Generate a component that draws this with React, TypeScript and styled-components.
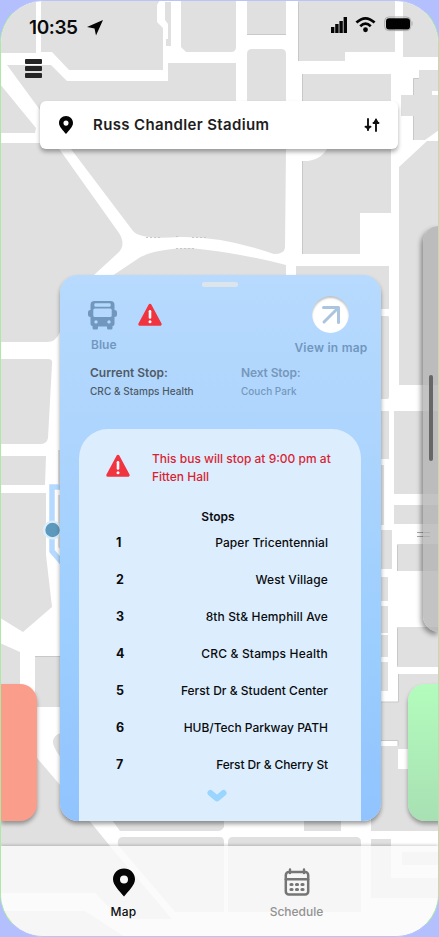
import React from "react";
import styled, { createGlobalStyle } from "styled-components";

const Global = createGlobalStyle`
  html, body { margin: 0; background: #b3c0fd; }
  * { box-sizing: border-box; }
`;

const Phone = styled.main`
  position: relative;
  width: 439px;
  height: 937px;
  overflow: hidden;
  display: flex;
  flex-direction: column;
  background: #fff;
  border: 1px solid #aee8a6;
  border-top-color: #b8c4fa;
  border-bottom-color: #b8c4fa;
  border-radius: 43px;
  font-family: Inter, "Open Sans", sans-serif;
  color: #0b0b0d;
`;

const MapLayer = styled.svg`
  position: absolute;
  inset: -1px auto auto -1px;
  width: 439px;
  height: 937px;
`;

const Label = styled.span<{ $size: number; $weight?: number; $track?: number; $color?: string }>`
  display: block;
  font-size: ${(p) => p.$size}px;
  font-weight: ${(p) => p.$weight ?? 500};
  letter-spacing: ${(p) => p.$track ?? 0}px;
  color: ${(p) => p.$color ?? "inherit"};
  line-height: 18px;
  white-space: nowrap;
`;

const StatusBar = styled.header`
  position: relative;
  height: 54px;
  padding: 0 25px 0 28px;
  display: flex;
  align-items: center;
  flex: none;
`;

const LocationArrow = styled.svg`
  margin-left: 9px;
`;

const StatusIcons = styled.div`
  margin-left: auto;
  margin-top: -7px;
  display: flex;
  align-items: center;
  gap: 8px;
`;

const MenuRow = styled.div`
  position: relative;
  height: 46px;
  padding: 4px 0 0 24px;
  flex: none;
`;

const MenuButton = styled.button`
  display: flex;
  flex-direction: column;
  gap: 2px;
  width: 17px;
  padding: 0;
  border: 0;
  background: none;
`;

const MenuBar = styled.i`
  height: 5px;
  border-radius: 1px;
  background: #252526;
`;

const Search = styled.div`
  position: relative;
  flex: none;
  width: 358px;
  height: 48px;
  margin-left: 39px;
  padding: 0 18px 0 19px;
  display: flex;
  align-items: center;
  background: #fff;
  border-radius: 6px;
  box-shadow: 0 3px 4px rgba(0, 0, 0, 0.32);
`;

const SearchText = styled.div`
  flex: 1;
  padding-left: 20px;
`;

const Deck = styled.section`
  position: relative;
  flex: none;
  height: 546px;
  margin-top: 126px;
  display: flex;
  align-items: flex-end;
  gap: 23px;
`;

const SideCard = styled.div<{ $side: "left" | "right" }>`
  flex: none;
  height: 137px;
  width: ${(p) => (p.$side === "left" ? 36 : 40)}px;
  margin-left: ${(p) => (p.$side === "left" ? 0 : 4)}px;
  border-radius: ${(p) => (p.$side === "left" ? "0 17px 17px 0" : "17px 0 0 17px")};
  background: ${(p) => (p.$side === "left" ? "#fb9d8b" : "linear-gradient(#b3fcbd, #a8e0b3)")};
  box-shadow: 0 3px 4px rgba(0, 0, 0, 0.35);
`;

const RouteCard = styled.article`
  flex: none;
  width: 321px;
  height: 546px;
  padding: 7px 20px 0 19px;
  overflow: hidden;
  display: flex;
  flex-direction: column;
  border-radius: 18px;
  background: linear-gradient(#b7dafe 0%, #aed5fd 28%, #9ccefe 66%, #91c3fe 100%);
  box-shadow: 0 3px 4px rgba(0, 0, 0, 0.38);
`;

const Grip = styled.i`
  align-self: center;
  width: 36px;
  height: 5px;
  border-radius: 2px;
  background: #dce4ec;
  flex: none;
`;

const CardHead = styled.div`
  display: flex;
  justify-content: space-between;
  height: 77px;
  flex: none;
  padding: 9px 0 0 9px;
`;

const BusColumn = styled.div`
  width: 80px;
  padding-top: 4px;
`;

const BusIcons = styled.div`
  display: flex;
  align-items: center;
  gap: 20px;
  height: 30px;
`;

const BusName = styled.div`
  margin-top: 6px;
  padding-left: 3px;
`;

const ViewButton = styled.button`
  display: flex;
  flex-direction: column;
  align-items: center;
  width: 76px;
  margin-right: -8px;
  padding: 0;
  border: 0;
  background: none;
  font-family: inherit;
  gap: 6px;
`;

const Circle = styled.i`
  display: flex;
  align-items: center;
  justify-content: center;
  width: 37px;
  height: 37px;
  margin-right: 1px;
  border-radius: 50%;
  background: #fff;
  box-shadow: inset 0 2px 2px rgba(70, 80, 95, 0.35);
`;

const StopSummary = styled.div`
  display: grid;
  grid-template-columns: 151px 1fr;
  height: 65px;
  padding-left: 11px;
  flex: none;
`;

const SummaryItem = styled.div`
  display: flex;
  flex-direction: column;
`;

const Panel = styled.div`
  flex: 1;
  display: flex;
  flex-direction: column;
  border-radius: 29px 29px 0 0;
  background: #dceefe;
`;

const Notice = styled.div`
  display: flex;
  height: 78px;
  padding: 21px 0 0 26px;
  gap: 21px;
`;

const NoticeIcon = styled.div`
  padding-top: 4px;
`;

const NoticeText = styled.p`
  margin: 0;
  display: flex;
  flex-direction: column;
`;

const StopsTitle = styled.h2`
  margin: 0;
  height: 17px;
  padding: 1px 4px 0 0;
  text-align: center;
`;

const StopList = styled.ol`
  margin: 0;
  padding: 0;
  list-style: none;
`;

const StopRow = styled.li`
  height: 37px;
  padding: 0 33px 0 37px;
  display: flex;
  justify-content: space-between;
  align-items: center;
`;

const More = styled.div`
  display: flex;
  justify-content: center;
  padding: 6px 6px 0 0;
`;

const Drawer = styled.aside`
  position: absolute;
  right: -1px;
  top: 225px;
  width: 16px;
  height: 406px;
  padding: 149px 0 0 6px;
  border-radius: 17px 0 0 17px;
  background: rgba(178, 178, 178, 0.78);
  box-shadow: -2px 3px 5px rgba(0, 0, 0, 0.4);
`;

const DrawerGrip = styled.i`
  display: block;
  width: 4px;
  height: 86px;
  border-radius: 2px;
  background: #666;
`;

const Nav = styled.nav`
  position: relative;
  margin-top: auto;
  height: 90px;
  flex: none;
  display: flex;
  padding-left: 36px;
  background: rgba(250, 250, 250, 0.84);
  box-shadow: 0 -1px 3px rgba(0, 0, 0, 0.2);
`;

const NavItem = styled.button`
  width: 173px;
  padding: 22px 0 0;
  border: 0;
  background: none;
  display: flex;
  flex-direction: column;
  justify-content: flex-start;
  align-items: center;
  gap: 6px;
  font-family: inherit;
  color: #0b0b0d;
`;

const CampusMap = () => (
  <MapLayer viewBox="0 0 439 937">
    <g fill="#e0e0e0">
      <path d="M0 0H36V53H0z" />
      <path d="M41 0H160L157 5V22L163 28V70H69L52 52H41z" />
      <path d="M165 2h6v44h-5v-7h2V24l-3-4z" />
      <path d="M181 0H236V47q0 5-5 5H186l-5-5z" />
      <path d="M247 0H286V34H247zM298 0H395V52H345V61H298zM403 0H439V57H403z" />
      <path d="M7 65H51L67 81H168V63H236V110H40z" />
      <path d="M247 110V54q0-5 5-5H281q5 0 5 5V110zM302 74H391V110H302z" />
      <path d="M0 84L36 128L35 133H0zM0 143H55L119 233Q126 244 119 252L94 275L60 310V332Q56 342 47 342H0z" />
      <path d="M71 149H286L285 248Q284 254 274 254Q222 236 180 237Q140 240 133 231z" />
      <path d="M112 276L136 260Q150 249 190 248Q235 252 286 265V277z" />
      <path d="M302 161Q319 162 327 149H391V213H360V254H302zM296 266H389V309H296z" />
      <path d="M413 78H419V70H439V91H432V95H439V130L425 140H413V116H401V95H413z" />
      <path d="M399 167L427 141H439V385H399z" />
      <path d="M0 359H48Q53 359 52 364L48 438Q47 444 40 444H0zM0 456H46L45 485H0zM0 493H46V555L52 607L23 632L0 618z" />
      <path d="M0 643L20 652V707H0zM35 656H70V707H35zM58 450h10v34h-10zM58 495h10v60l-10-8z" />
      <path d="M70 732Q53 732 53 742Q53 750 70 768zM0 720L37 758L61 786L110 846H0z" />
      <path d="M380 316h8q1 0 1 2v79q0 2-2 2h-7zM380 411h9v48h-9zM380 465h4v60h-4zM380 530h12v39h-12zM380 577h8v24h-8zM380 606h8v27h-8zM380 635h8v22h-8zM380 662h8v29h-8z" />
      <path d="M394 411H439V494H394zM394 505H439V524H394zM397 544H439V571H397zM397 627H439V667H397z" />
      <path d="M398 674H439V831H371V746H398V740H380V702H398z" />
      <path d="M112 820H224V827q-2 4-6 4H120zM304 820H341V831H304zM122 837H220q4 0 4 5V912H175L118 845q-1-7 4-8zM233 837H356q5 0 5 5V912H228V842q0-5 5-5zM371 839H391V878H439V898H371z" />
      <path d="M402 852H439V865H402zM0 846H110L172 919H120L95 893H0zM0 911H85L125 937H0z" />
    </g>
    <g fill="#fff">
      <path d="M398 749H408V769H398z" />
    </g>
    <g fill="none" stroke="#c8c8c8" strokeWidth="1">
      <path d="M298.5 2V61M302.5 74V101M247 34.5H286M413.5 140V116M413.5 95V78.500H419M302.500 161V254M398.500 674V702H381M381 740.500H398V746M35 656.500H60M397.500 545V571M397.500 628V666" />
      <path d="M146 237.500H160M176 236.500H180M192 237.500H206M176 248.500H194" strokeDasharray="2 2" />
      <path d="M417 532.500H430M417 536.500H430" stroke="#aaa" />
    </g>
    <path d="M62 487H52V551L64 565" fill="none" stroke="#b6daff" strokeWidth="5.500" />
    <circle cx="52.500" cy="530" r="9.500" fill="#dceefb" />
    <circle cx="52.500" cy="530" r="7.200" fill="#5d99bd" />
  </MapLayer>
);

const Pin = ({ w, h }: { w: number; h: number }) => (
  <svg width={w} height={h} viewBox="0 0 22 28">
    <path fill="#050505" fillRule="evenodd" d="M11 0C4.800 0 0 4.700 0 10.700C0 16.500 6.500 22.500 11 28C15.500 22.500 22 16.500 22 10.700C22 4.700 17.200 0 11 0zM11 7a4 4 0 1 1 0 8a4 4 0 0 1 0-8z" />
  </svg>
);

const Warning = () => (
  <svg width="26" height="24" viewBox="0 0 26 24">
    <path d="M13 2.200L23.200 21.200H2.800z" fill="#f03440" stroke="#f03440" strokeWidth="3" strokeLinejoin="round" />
    <path d="M13 8.300V14.500" stroke="#fff" strokeWidth="2.600" strokeLinecap="round" />
    <circle cx="13" cy="18.800" r="1.500" fill="#fff" />
  </svg>
);

const Bus = () => (
  <svg width="29" height="29" viewBox="0 0 29 29">
    <path fill="#7197bf" fillRule="evenodd" d="M6.500 0H22.500Q26.500 0 26.500 4V9Q29 9 29 11V14Q29 16 26.500 16V23Q26.500 25 24.500 25V27Q24.500 28.500 23 28.500H20.500Q19 28.500 19 27V25.500H10V27Q10 28.500 8.500 28.500H6Q4.500 28.500 4.500 27V25Q2.500 25 2.500 23V16Q0 16 0 14V11Q0 9 2.500 9V4Q2.500 0 6.500 0zM7.500 2.300Q6.300 2.300 6.300 3.500V4.500Q6.300 5.700 7.500 5.700H21.500Q22.700 5.700 22.700 4.500V3.500Q22.700 2.300 21.500 2.300zM6.800 7.500Q5.300 7.500 5.300 9V14.500Q5.300 16 6.800 16H22.200Q23.700 16 23.700 14.500V9Q23.700 7.500 22.200 7.500zM8 19.200a1.700 1.700 0 1 0 0 3.400a1.700 1.700 0 0 0 0-3.400zM21 19.200a1.700 1.700 0 1 0 0 3.400a1.700 1.700 0 0 0 0-3.400z" />
  </svg>
);

const Calendar = () => (
  <svg width="26" height="29" viewBox="0 0 26 29" fill="none" stroke="#757575" strokeLinecap="round">
    <rect x="1.800" y="4" width="22.400" height="22.500" rx="3" strokeWidth="2.500" />
    <path d="M2 11.200H24" strokeWidth="2.600" />
    <path d="M6 1.500V5M20 1.500V5" strokeWidth="2.400" />
    <path d="M7 16.500h1M12.500 16.500h1M18 16.500h1M7 21.500h1M12.500 21.500h1M18 21.500h1" strokeWidth="3.200" />
  </svg>
);

const stops: { name: string; track: number }[] = [
  { name: "Paper Tricentennial", track: 0.08 },
  { name: "West Village", track: 0.12 },
  { name: "8th St& Hemphill Ave", track: 0.12 },
  { name: "CRC & Stamps Health", track: 0.17 },
  { name: "Ferst Dr & Student Center", track: 0.03 },
  { name: "HUB/Tech Parkway PATH", track: -0.04 },
  { name: "Ferst Dr & Cherry St", track: -0.12 },
];

export default function App() {
  return (
    <>
      <Global />
      <Phone>
        <CampusMap />
        <StatusBar>
          <Label $size={19} $weight={600} $track={-0.4}>10:35</Label>
          <LocationArrow width="16" height="16" viewBox="0 0 16 16">
            <path d="M16 0L9 15.500L7.500 8.500L0 7z" fill="#050505" />
          </LocationArrow>
          <StatusIcons>
            <svg width="16" height="16" viewBox="0 0 16 16">
              <path d="M0 10h3.400v6H0zM4.200 7h3.400v9H4.200zM8.400 4h3.400v12H8.400zM12.600 0H16v16h-3.400z" fill="#050505" />
            </svg>
            <svg width="21" height="17" viewBox="0 0 22 17" fill="none" stroke="#050505" strokeWidth="2.800">
              <path d="M1.500 6.500Q11-2.500 20.500 6.500M5.500 10.300Q11 5 16.500 10.300" />
              <circle cx="11" cy="14" r="2.500" fill="#050505" stroke="none" />
            </svg>
            <svg width="29" height="18" viewBox="0 0 29 18">
              <rect x=".7" y="1" width="26" height="13.600" rx="4" fill="none" stroke="#aaa" />
              <rect x="2" y="2.200" width="24" height="11.300" rx="3" fill="#020202" />
              <path d="M28 5.500v4" stroke="#aaa" />
            </svg>
          </StatusIcons>
        </StatusBar>
        <MenuRow>
          <MenuButton aria-label="Menu"><MenuBar /><MenuBar /><MenuBar /></MenuButton>
        </MenuRow>
        <Search>
          <Pin w={14} h={18} />
          <SearchText><Label $size={15} $weight={600} $track={0.36} $color="#1e1e22">Russ Chandler Stadium</Label></SearchText>
          <svg width="16" height="14" viewBox="0 0 16 14" fill="none" stroke="#111" strokeWidth="1.900" strokeLinecap="round">
            <path d="M4 1V12M1.500 8.800H6.500M12 2V13M9.500 5H14.500" />
            <path d="M1 8h6L4 13zM9 5h6L12 0z" fill="#111" stroke="none" />
          </svg>
        </Search>
        <Deck>
          <SideCard $side="left" />
          <RouteCard>
            <Grip />
            <CardHead>
              <BusColumn>
                <BusIcons><Bus /><Warning /></BusIcons>
                <BusName><Label $size={12} $weight={600} $color="#7197bf">Blue</Label></BusName>
              </BusColumn>
              <ViewButton>
                <Circle>
                  <svg width="20" height="20" viewBox="0 0 20 20" fill="none" stroke="#abc5df" strokeWidth="3" strokeLinecap="round" strokeLinejoin="round">
                    <path d="M2.500 2.500H17.500V17.500M17 3L3 17" />
                  </svg>
                </Circle>
                <Label $size={12} $weight={600} $track={0.24} $color="#7197bf">View in map</Label>
              </ViewButton>
            </CardHead>
            <StopSummary>
              <SummaryItem>
                <Label $size={12} $weight={600} $color="#505b68">Current Stop:</Label>
                <Label $size={10} $track={0.04} $color="#4e5965">CRC &amp; Stamps Health</Label>
              </SummaryItem>
              <SummaryItem>
                <Label $size={12} $weight={600} $track={-0.12} $color="#7598bb">Next Stop:</Label>
                <Label $size={10} $color="#7598bb">Couch Park</Label>
              </SummaryItem>
            </StopSummary>
            <Panel>
              <Notice>
                <NoticeIcon><Warning /></NoticeIcon>
                <NoticeText>
                  <Label $size={12} $color="#d91f32">This bus will stop at 9:00 pm at</Label>
                  <Label $size={12} $color="#d91f32">Fitten Hall</Label>
                </NoticeText>
              </Notice>
              <StopsTitle><Label $size={12} $weight={600}>Stops</Label></StopsTitle>
              <StopList>
                {stops.map(({ name, track }, i) => (
                  <StopRow key={name}>
                    <Label $size={12.5} $weight={700}>{i + 1}</Label>
                    <Label $size={12} $track={track}>{name}</Label>
                  </StopRow>
                ))}
              </StopList>
              <More>
                <svg width="20" height="14" viewBox="0 0 20 14">
                  <path d="M3.500 4L10 9.500L16.500 4" fill="none" stroke="#99d5fe" strokeWidth="6" strokeLinecap="round" strokeLinejoin="round" />
                </svg>
              </More>
            </Panel>
          </RouteCard>
          <SideCard $side="right" />
        </Deck>
        <Drawer><DrawerGrip /></Drawer>
        <Nav>
          <NavItem><Pin w={22} h={29} /><Label $size={12} $track={0.2}>Map</Label></NavItem>
          <NavItem><Calendar /><Label $size={12} $color="#929292">Schedule</Label></NavItem>
        </Nav>
      </Phone>
    </>
  );
}
